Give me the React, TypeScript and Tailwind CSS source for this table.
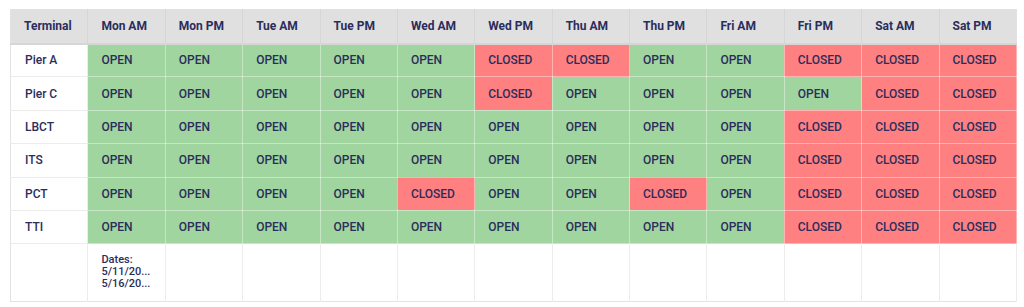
import React from 'react';

const days = ['Mon AM', 'Mon PM', 'Tue AM', 'Tue PM', 'Wed AM', 'Wed PM', 'Thu AM', 'Thu PM', 'Fri AM', 'Fri PM', 'Sat AM', 'Sat PM'];

// 1 = open, 0 = closed
const rows: { name: string; status: number[] }[] = [
  { name: 'Pier A', status: [1, 1, 1, 1, 1, 0, 0, 1, 1, 0, 0, 0] },
  { name: 'Pier C', status: [1, 1, 1, 1, 1, 0, 1, 1, 1, 1, 0, 0] },
  { name: 'LBCT', status: [1, 1, 1, 1, 1, 1, 1, 1, 1, 0, 0, 0] },
  { name: 'ITS', status: [1, 1, 1, 1, 1, 1, 1, 1, 1, 0, 0, 0] },
  { name: 'PCT', status: [1, 1, 1, 1, 0, 1, 1, 0, 1, 0, 0, 0] },
  { name: 'TTI', status: [1, 1, 1, 1, 1, 1, 1, 1, 1, 0, 0, 0] },
];

const App: React.FC = () => {
  return (
    <div className="bg-white pt-[9px] pl-[10px] text-[12px] text-[#2b2d5c]" style={{ fontFamily: '"Roboto", "Liberation Sans", sans-serif' }}>
      <table className="w-[1007px] table-fixed border-collapse border border-[#e2e2e2]">
        <thead>
          <tr className="h-[34px] bg-[#e0e0e0]">
            <th className="border-r border-b-2 border-[#d6d6d6] pl-[13px] text-left font-bold">Terminal</th>
            {days.map(d => (
              <th key={d} className="border-r border-b-2 border-[#d6d6d6] pl-[13px] text-left font-bold last:border-r-0">{d}</th>
            ))}
          </tr>
        </thead>
        <tbody>
          {rows.map(r => (
            <tr key={r.name} className="h-[33.4px]">
              <td className="border-r border-b border-[#ececec] pl-[14px] font-medium">{r.name}</td>
              {r.status.map((s, i) => (
                <td
                  key={i}
                  className={`border-r border-b border-[#ffffff66] pl-[13px] font-medium ${s ? 'bg-[#a0d59f]' : 'bg-[#ff8080]'}`}
                >
                  {s ? 'OPEN' : 'CLOSED'}
                </td>
              ))}
            </tr>
          ))}
          <tr className="h-[58px]">
            <td className="border-r border-[#ececec]"></td>
            <td className="border-r border-[#ececec] pl-[13px] pt-[10px] align-top text-[11px] leading-[12px] font-medium">
              <div>Dates:</div>
              <div>5/11/20...</div>
              <div>5/16/20...</div>
            </td>
            {days.slice(1).map(d => (
              <td key={d} className="border-r border-[#ececec]"></td>
            ))}
          </tr>
        </tbody>
      </table>
    </div>
  );
};

export default App;
